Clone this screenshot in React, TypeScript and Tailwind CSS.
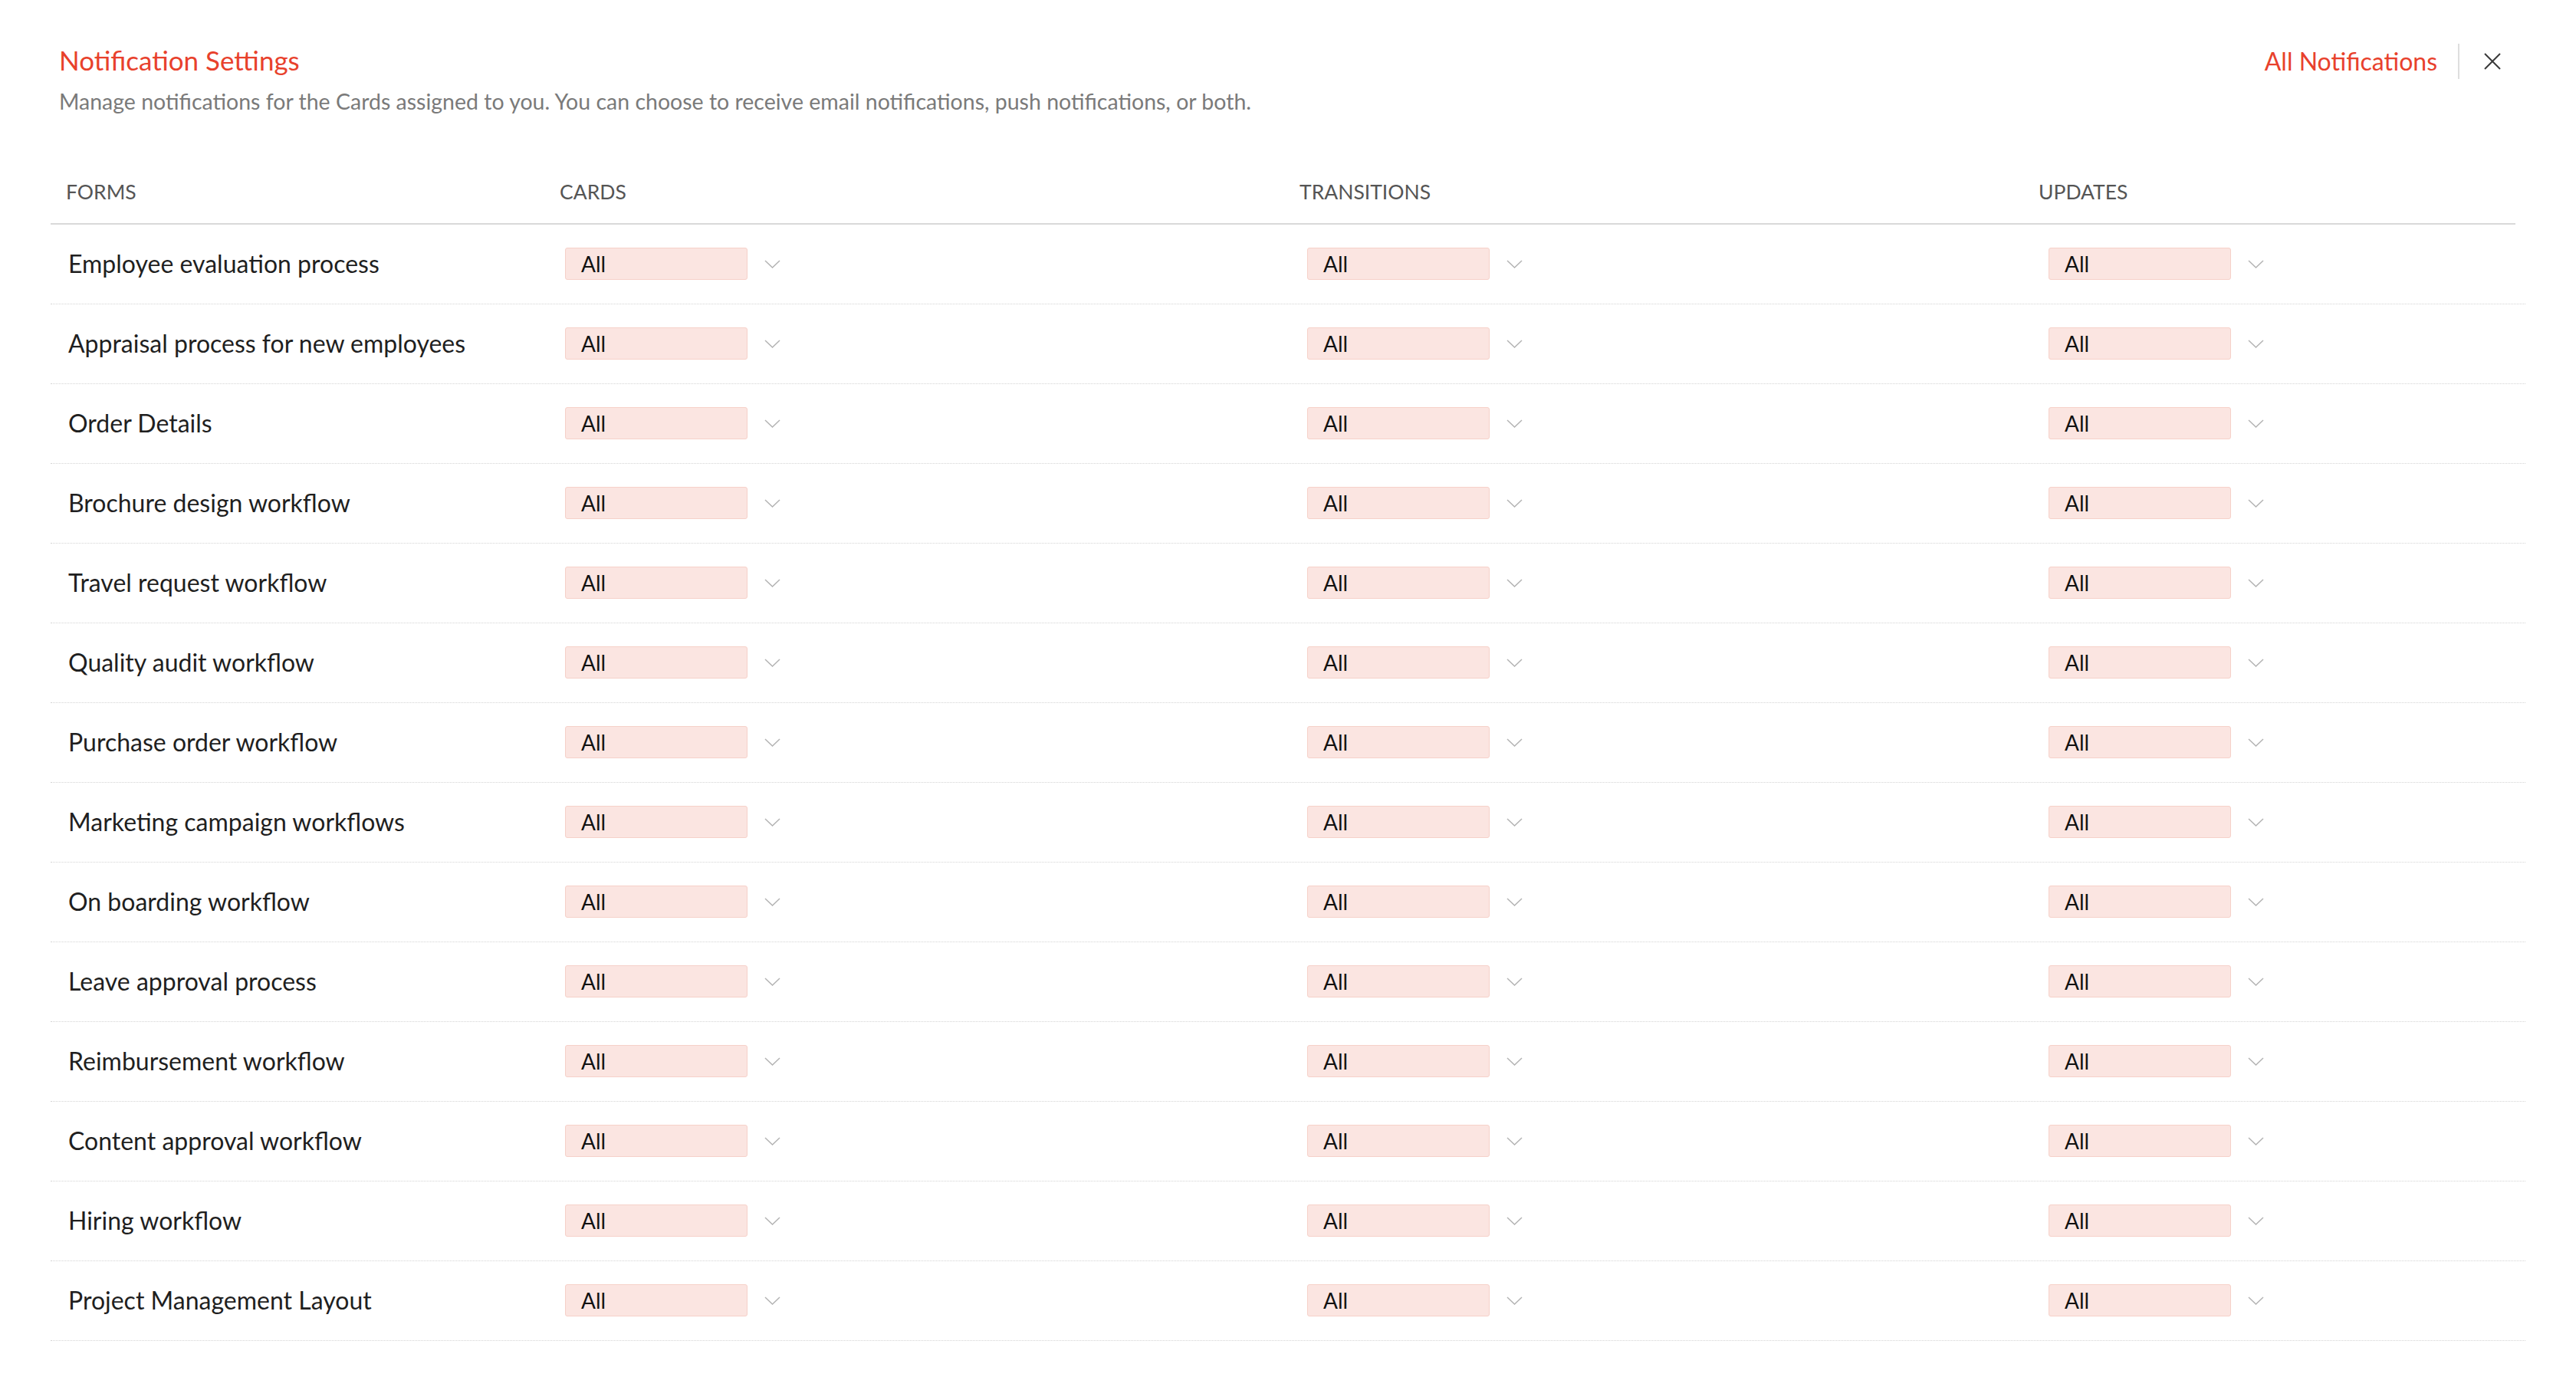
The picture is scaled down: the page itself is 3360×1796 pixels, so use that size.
const forms = [
  "Employee evaluation process",
  "Appraisal process for new employees",
  "Order Details",
  "Brochure design workflow",
  "Travel request workflow",
  "Quality audit workflow",
  "Purchase order workflow",
  "Marketing campaign workflows",
  "On boarding workflow",
  "Leave approval process",
  "Reimbursement workflow",
  "Content approval workflow",
  "Hiring workflow",
  "Project Management Layout",
];

function Chevron() {
  return (
    <svg width="21" height="11" viewBox="0 0 21 11" fill="none" className="shrink-0">
      <path d="M1 1l9.5 9L20 1" stroke="#b3b3b3" strokeWidth="1.5" />
    </svg>
  );
}

function SelectBox() {
  return (
    <div className="flex items-center gap-[22px]">
      <div className="w-[238px] h-[42px] flex items-center pl-[20px] bg-[#fbe5e1] border border-[#f6d1c9] rounded-[3px] text-[28px] text-[#111]">
        All
      </div>
      <Chevron />
    </div>
  );
}

export default function App() {
  return (
    <div
      className="min-h-screen bg-white px-[66px] pt-[57px]"
      style={{ fontFamily: "Lato, 'Open Sans', sans-serif" }}
    >
      {/* Header */}
      <div className="flex items-start justify-between pl-[11px] pr-[31px]">
        <div>
          <h1 className="text-[35px] text-[#e8412c] leading-[1.2]">Notification Settings</h1>
          <p className="mt-[16px] text-[28.5px] text-[#7a7a7a] leading-[1.2]">
            Manage notifications for the Cards assigned to you. You can choose to receive email
            notifications, push notifications, or both.
          </p>
        </div>
        <div className="flex items-center pt-[0px]">
          <span className="text-[32px] text-[#e8412c] leading-[1.2]">All Notifications</span>
          <div className="ml-[27px] w-[2px] h-[46px] bg-[#dedede]" />
          <svg className="ml-[31px]" width="24" height="24" viewBox="0 0 24 24" fill="none">
            <path d="M2 2l20 20M22 2L2 22" stroke="#3a3a3a" strokeWidth="2" />
          </svg>
        </div>
      </div>

      {/* Table header */}
      <div className="mt-[86px] mr-[13px] grid grid-cols-[664px_965px_964px_1fr] border-b-2 border-[#d9d9d9] pb-[24px] text-[26.5px] text-[#555] leading-[1.2]">
        <div className="pl-[20px]">FORMS</div>
        <div>CARDS</div>
        <div>TRANSITIONS</div>
        <div>UPDATES</div>
      </div>

      {/* Rows */}
      <div>
        {forms.map((name) => (
          <div
            key={name}
            className="grid grid-cols-[646px_970px_967px_1fr] h-[104px] border-b border-dotted border-[#d4d4d4]"
          >
            <div className="flex items-center pl-[23px] text-[32px] text-[#1f1f1f]">{name}</div>
            <div className="flex items-center pl-[25px]">
              <SelectBox />
            </div>
            <div className="flex items-center pl-[23px]">
              <SelectBox />
            </div>
            <div className="flex items-center pl-[23px]">
              <SelectBox />
            </div>
          </div>
        ))}
      </div>
    </div>
  );
}
